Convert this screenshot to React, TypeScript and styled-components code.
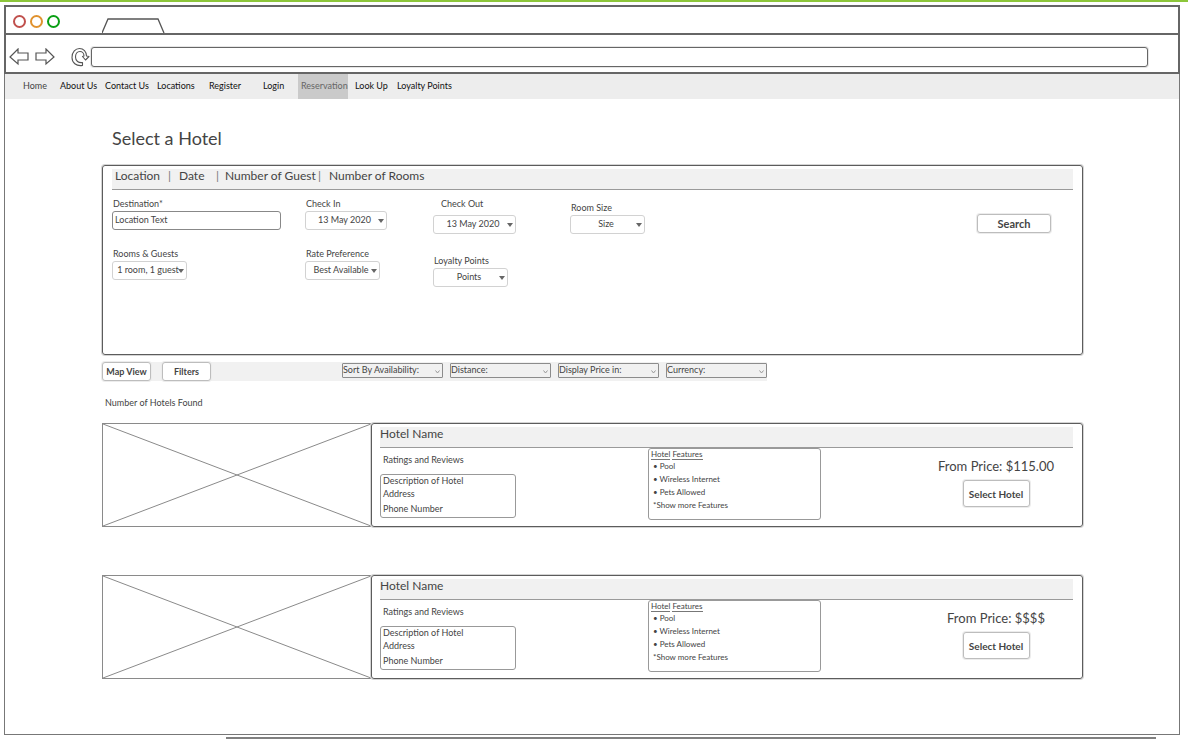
import React, { useId } from "react";
import styled, { createGlobalStyle } from "styled-components";

const ink = "#444";
const line = "#666";
const shade = "#f1f1f1";

const GlobalStyle = createGlobalStyle`
  *, *::before, *::after { box-sizing: border-box; }
  body {
    margin: 0;
    background: #fff;
    color: ${ink};
    font-family: Lato, "Open Sans", sans-serif;
    font-size: 9px;
    line-height: 12px;
  }
  button, input, select { font: inherit; color: inherit; margin: 0; }
  h1, h2, h3, p, ul { margin: 0; padding: 0; font-weight: 400; }
  ul { list-style: none; }
`;

const Page = styled.div`
  min-height: 100vh;
  border-top: 2px solid #8cc63a;
  padding: 3px 8px 0 4px;
`;

const Window = styled.div`
  display: flex;
  flex-direction: column;
`;

const TitleBar = styled.div`
  display: flex;
  align-items: flex-end;
  height: 28px;
  padding-left: 7px;
  border: 2px solid ${line};
  border-bottom: 0;
`;

const Lights = styled.div`
  display: flex;
  gap: 4px;
  width: 89px;
  padding-bottom: 5px;
`;

const Light = styled.span<{ $color: string }>`
  width: 13px;
  height: 13px;
  border: 2px solid ${(p) => p.$color};
  border-radius: 50%;
`;

const AddressBar = styled.div`
  display: flex;
  align-items: center;
  height: 41px;
  padding: 6px 30px 0 3px;
  border: 2px solid ${line};
`;

const IconButton = styled.button`
  display: flex;
  padding: 0;
  border: 0;
  background: none;
`;

const NavButtons = styled.div`
  display: flex;
  gap: 6px;
  width: 62px;
`;

const Url = styled.input`
  flex: 1;
  min-width: 0;
  height: 20px;
  margin-left: 1px;
  padding: 0 6px;
  border: 1px solid ${line};
  border-radius: 3px;
  box-shadow: 0 0 0 1px #e6e6e6;
  background: #fff;
`;

const Body = styled.div`
  border: 1px solid #777;
  border-top: 0;
`;

const Nav = styled.nav`
  display: grid;
  grid-template-columns: 37px 45px 52px 52px 54px 38px 54px 42px auto;
  justify-content: start;
  height: 25px;
  padding-left: 15px;
  background: #ededed;
`;

const NavLink = styled.a<{ $active?: boolean; $color?: string }>`
  justify-self: start;
  padding: ${(p) => (p.$active ? "0 0 0 3px" : "0 3px")};
  line-height: 24px;
  white-space: nowrap;
  text-decoration: none;
  color: ${(p) => (p.$active ? "#666" : p.$color || "#111")};
  background: ${(p) => (p.$active ? "#cacaca" : "none")};
`;

const Main = styled.main`
  padding: 27px 96px 55px 97px;
`;

const Title = styled.h1`
  padding-left: 10px;
  font-size: 18px;
  line-height: 24px;
`;

const Panel = styled.section`
  flex: 1;
  min-width: 0;
  padding: 3px 9px 3px 8px;
  border: 1px solid #5c5c5c;
  border-radius: 3px;
  box-shadow: 0 0 0 1px #d4d4d4;
`;

const SearchPanel = styled(Panel)`
  min-height: 190px;
  margin-top: 15px;
  padding-left: 9px;
`;

const PanelHead = styled.header`
  display: flex;
  height: 21px;
  background: ${shade};
  border-bottom: 1px solid #9a9a9a;
  font-size: 12px;
  line-height: 14px;
`;

const Crumbs = styled(PanelHead)`
  padding-left: 3px;
`;

const Crumb = styled.span<{ $width?: number }>`
  width: ${(p) => (p.$width ? `${p.$width}px` : "auto")};
  white-space: nowrap;
`;

const Bar = styled.span<{ $width: number }>`
  width: ${(p) => p.$width}px;
  color: #777;
`;

const Form = styled.form`
  display: grid;
  grid-template-columns: 193px 128px 137px 1fr auto;
  padding: 8px 22px 0 0;
`;

const Column = styled.div<{ $top?: number; $rowGap?: number }>`
  display: flex;
  flex-direction: column;
  gap: ${(p) => p.$rowGap || 18}px;
  padding-top: ${(p) => p.$top || 0}px;
`;

const FieldBox = styled.div<{ $gap: number }>`
  display: flex;
  flex-direction: column;
  align-items: flex-start;
  gap: ${(p) => p.$gap}px;
`;

const Label = styled.label<{ $indent: number }>`
  padding-left: ${(p) => p.$indent}px;
`;

const TextInput = styled.input`
  width: 169px;
  height: 19px;
  padding: 0 2px 2px;
  border: 1px solid #888;
  border-radius: 3px;
  background: #fff;
`;

const SelectWrap = styled.div<{ $width: number }>`
  position: relative;
  width: ${(p) => p.$width}px;
`;

const Select = styled.select`
  display: block;
  width: 100%;
  height: 19px;
  padding: 0 3px 2px 0;
  appearance: none;
  border: 1px solid #d2d2d2;
  border-radius: 3px;
  background: #fff;
  text-align-last: center;
`;

const SortSelect = styled(Select)`
  height: 15px;
  padding: 0 0 1px;
  border-color: #8c8c8c;
  border-radius: 1px;
  background: ${shade};
  text-align-last: left;
`;

const Mark = styled.svg`
  position: absolute;
  right: 3px;
  top: 50%;
  transform: translateY(-50%);
  pointer-events: none;
`;

const Button = styled.button<{ $width: number; $height: number; $size: number }>`
  width: ${(p) => p.$width}px;
  height: ${(p) => p.$height}px;
  padding: 0;
  border: 1px solid #bdbdbd;
  border-radius: 3px;
  box-shadow: 0 0 0 1px #ececec;
  background: #fff;
  font-size: ${(p) => p.$size}px;
  font-weight: 700;
  white-space: nowrap;
`;

const SearchCell = styled.div`
  padding-top: 16px;
`;

const Tools = styled.div`
  display: flex;
  width: fit-content;
  margin-top: 7px;
  background: ${shade};
`;

const ToolButtons = styled.div`
  display: flex;
  gap: 11px;
  width: 240px;
`;

const Sorts = styled.div`
  display: flex;
  gap: 7px;
  padding-top: 1px;
`;

const Found = styled.p`
  padding: 16px 0 14px 3px;
`;

const Cards = styled.div`
  display: flex;
  flex-direction: column;
  gap: 48px;
`;

const Card = styled.article`
  display: flex;
  min-height: 104px;
`;

const Picture = styled.svg`
  flex: none;
  width: 269px;
  height: 104px;
  border: 1px solid #8a8a8a;
  border-right: 0;
`;

const CardBody = styled.div`
  display: grid;
  grid-template-columns: 268px 173px 1fr;
`;

const Details = styled.div`
  padding-top: 6px;
`;

const Ratings = styled.p`
  padding-left: 3px;
`;

const Description = styled.div`
  width: 136px;
  height: 44px;
  margin-top: 8px;
  padding-left: 2px;
  border: 1px solid #999;
  border-radius: 3px;
  line-height: 15px;

  p:first-child { line-height: 11px; }
`;

const Features = styled.div`
  height: 72px;
  padding-left: 2px;
  border: 1px solid #999;
  border-radius: 3px;
  font-size: 8px;
`;

const FeatureTitle = styled.h3`
  display: flex;
  gap: 2px;
  font-size: 8px;
  line-height: 10px;

  span { border-bottom: 1px solid #777; }
`;

const FeatureList = styled.ul`
  padding-left: 2px;
  line-height: 13px;
`;

const Offer = styled.div`
  display: flex;
  flex-direction: column;
  align-items: center;
  gap: 6px;
  padding: 10px 0 0 98px;
`;

const Price = styled.p`
  font-size: 13px;
  line-height: 16px;
  white-space: nowrap;
`;

const Scroll = styled.div`
  height: 2px;
  margin: 2px 24px 0 222px;
  background: #808080;
`;

function Arrow({ flip }: { flip?: boolean }) {
  return (
    <svg width="20" height="18" viewBox="0 0 20 18" fill="none" stroke="#555" strokeWidth="1.2">
      <path d={flip ? "M1 5h10V1l8 8-8 7v-4H1z" : "M19 5H9V1L1 9l8 7v-4h10z"} />
    </svg>
  );
}

function Triangle() {
  return (
    <Mark width="6" height="4" viewBox="0 0 6 4">
      <path d="M0 0h6L3 4z" fill="#666" />
    </Mark>
  );
}

function Chevron() {
  return (
    <Mark width="5" height="4" viewBox="0 0 5 4">
      <path d="M.5.5l2 2.5 2-2.5" fill="none" stroke="#999" />
    </Mark>
  );
}

type PickProps = { label: string; value: string; width: number; gap?: number; indent?: number };

function Pick({ label, value, width, gap = 1, indent = 1 }: PickProps) {
  const id = useId();
  return (
    <FieldBox $gap={gap}>
      <Label htmlFor={id} $indent={indent}>{label}</Label>
      <SelectWrap $width={width}>
        <Select id={id}>
          <option>{value}</option>
        </Select>
        <Triangle />
      </SelectWrap>
    </FieldBox>
  );
}

function Hotel({ price }: { price: string }) {
  return (
    <Card>
      <Picture viewBox="0 0 268 102" preserveAspectRatio="none" stroke="#8a8a8a" role="img" aria-label="Hotel photo">
        <path d="M0 0L268 102M0 102L268 0" />
      </Picture>
      <Panel>
        <PanelHead as="h2">Hotel Name</PanelHead>
        <CardBody>
          <Details>
            <Ratings>Ratings and Reviews</Ratings>
            <Description>
              <p>Description of Hotel</p>
              <p>Address</p>
              <p>Phone Number</p>
            </Description>
          </Details>
          <Features>
            <FeatureTitle>
              <span>Hotel</span> <span>Features</span>
            </FeatureTitle>
            <FeatureList>
              <li>• Pool</li>
              <li>• Wireless Internet</li>
              <li>• Pets Allowed</li>
              <li>*Show more Features</li>
            </FeatureList>
          </Features>
          <Offer>
            <Price>From Price: {price}</Price>
            <Button type="button" $width={67} $height={27} $size={10}>Select Hotel</Button>
          </Offer>
        </CardBody>
      </Panel>
    </Card>
  );
}

const links = ["Home", "About Us", "Contact Us", "Locations", "Register", "Login", "Reservation", "Look Up", "Loyalty Points"];
const sorts = ["Sort By Availability:", "Distance:", "Display Price in:", "Currency:"];

export default function App() {
  return (
    <Page>
      <GlobalStyle />
      <Window>
        <TitleBar>
          <Lights>
            <Light $color="#c0504d" />
            <Light $color="#e0922f" />
            <Light $color="#0a9f14" />
          </Lights>
          <svg width="63" height="15" viewBox="0 0 63 15" fill="none" stroke="#555" strokeWidth="1.3">
            <path d="M0 15L6 1h50l6 14" />
          </svg>
        </TitleBar>
        <AddressBar>
          <NavButtons>
            <IconButton type="button" aria-label="Back"><Arrow /></IconButton>
            <IconButton type="button" aria-label="Forward"><Arrow flip /></IconButton>
          </NavButtons>
          <IconButton type="button" aria-label="Reload">
            <svg width="19" height="20" viewBox="0 0 19 20" fill="none" stroke="#555" strokeWidth="1.1" strokeLinejoin="round">
              <path d="M11.500 18.500C5 19.500 1 15.500 1 10.500 1 5 4.500 1.500 8.500 1.500c4 0 7 3 7 7.500l2.500.5-3.500 3.500-3-3.500 1.500-.5c0-3-2-4.500-4-4.500-3 0-4.500 2.500-4.500 5.500 0 4 3 6 7 5.500z" />
            </svg>
          </IconButton>
          <Url type="text" aria-label="Address" />
        </AddressBar>
        <Body>
          <Nav>
            {links.map((text) => (
              <NavLink key={text} href="#" $active={text === "Reservation"} $color={text === "Home" ? ink : undefined}>
                {text}
              </NavLink>
            ))}
          </Nav>
          <Main>
            <Title>Select a Hotel</Title>
            <SearchPanel>
              <Crumbs>
                <Crumb $width={53}>Location</Crumb>
                <Bar $width={11}>|</Bar>
                <Crumb $width={37}>Date</Crumb>
                <Bar $width={9}>|</Bar>
                <Crumb $width={93}>Number of Guest</Crumb>
                <Bar $width={11}>|</Bar>
                <Crumb>Number of Rooms</Crumb>
              </Crumbs>
              <Form onSubmit={(e) => e.preventDefault()}>
                <Column>
                  <FieldBox $gap={1}>
                    <Label htmlFor="destination" $indent={1}>Destination*</Label>
                    <TextInput id="destination" defaultValue="Location Text" />
                  </FieldBox>
                  <Pick label="Rooms & Guests" value="1 room, 1 guest" width={75} />
                </Column>
                <Column>
                  <Pick label="Check In" value="13 May 2020" width={82} />
                  <Pick label="Rate Preference" value="Best Available" width={75} />
                </Column>
                <Column $rowGap={21}>
                  <Pick label="Check Out" value="13 May 2020" width={83} gap={5} indent={8} />
                  <Pick label="Loyalty Points" value="Points" width={75} />
                </Column>
                <Column $top={4}>
                  <Pick label="Room Size" value="Size" width={75} />
                </Column>
                <SearchCell>
                  <Button type="submit" $width={74} $height={19} $size={11}>Search</Button>
                </SearchCell>
              </Form>
            </SearchPanel>
            <Tools>
              <ToolButtons>
                <Button type="button" $width={49} $height={19} $size={9}>Map View</Button>
                <Button type="button" $width={49} $height={19} $size={9}>Filters</Button>
              </ToolButtons>
              <Sorts>
                {sorts.map((text) => (
                  <SelectWrap key={text} $width={101}>
                    <SortSelect aria-label={text}>
                      <option>{text}</option>
                    </SortSelect>
                    <Chevron />
                  </SelectWrap>
                ))}
              </Sorts>
            </Tools>
            <Found>Number of Hotels Found</Found>
            <Cards>
              <Hotel price="$115.00" />
              <Hotel price="$$$$" />
            </Cards>
          </Main>
        </Body>
      </Window>
      <Scroll />
    </Page>
  );
}
